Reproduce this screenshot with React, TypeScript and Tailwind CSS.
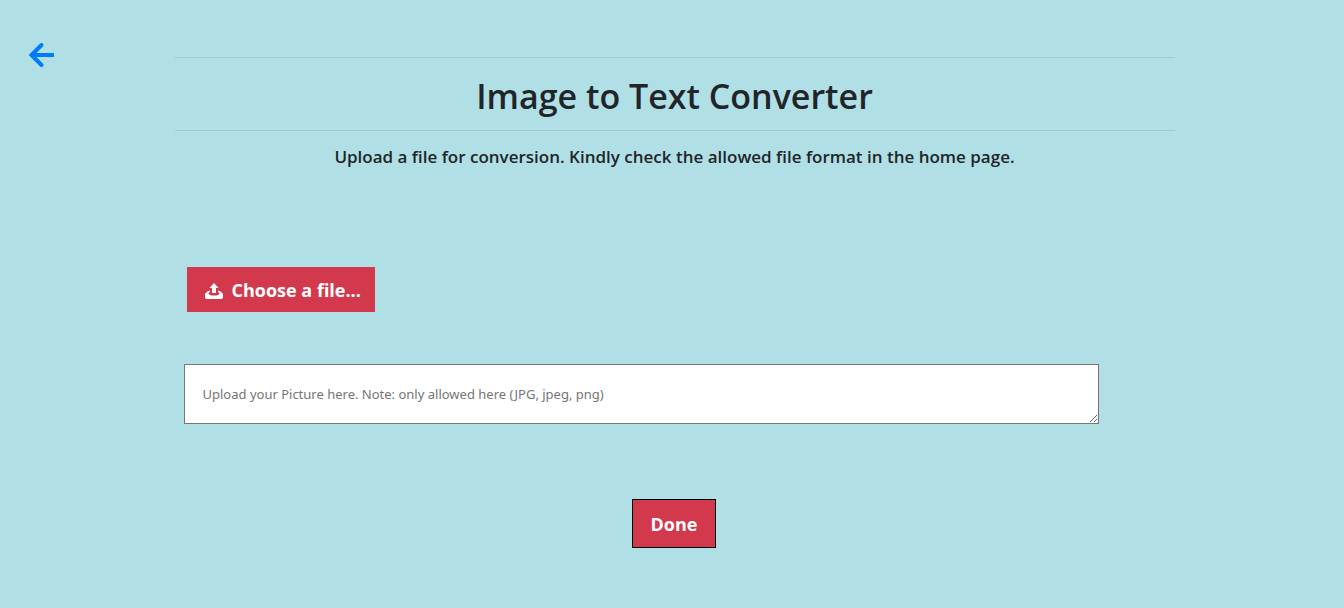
export default function App() {
  return (
    <main className="relative min-h-screen bg-[#b0e0e6] pl-[5px] font-['Open_Sans','Noto_Sans',sans-serif] text-[#212529]">
      <a href="#home" aria-label="Back" className="absolute top-[42px] left-7 text-[#007bff]">
        <svg width="27" height="26" viewBox="0 0 27 26" fill="none" stroke="currentColor" strokeWidth="4" aria-hidden="true">
          <path d="M13.500 3L3.500 13l10 10" strokeLinecap="round" strokeLinejoin="miter" />
          <path d="M4 13h22" />
        </svg>
      </a>
      <div className="mx-auto w-3/4 max-w-[1000px] pt-[57px]">
        <h1 className="border-y border-[#9fcacf] pt-[14px] pb-[10px] text-center text-[34px] leading-[48px] font-semibold">Image to Text Converter</h1>
        <p className="mt-3 text-center text-[17px] leading-7 font-semibold">
          Upload a file for conversion. Kindly check the allowed file format in the home page.
        </p>
        <form className="pr-[10px] pl-[9px]">
          <button type="button" className="mt-24 ml-[3px] flex h-[45px] items-center gap-[9px] bg-[#d3394c] pr-[14px] pl-[18px] text-lg font-bold text-white">
            <svg width="18" height="18" viewBox="0 0 18 18" fill="currentColor" aria-hidden="true">
              <path d="M9 2L4.500 7H7v5h4V7h2.500z" />
              <path d="M5 9.500C3 10 1.500 11 .5 12.300Q0 13 0 14v2q0 2 2 2h14q2 0 2-2v-2q0-1-.5-1.700C16.500 11 15 10 13 9.500V11q1.700.5 1.500 1.500Q14 14.500 9 14.500T3.500 12.500Q3.300 11.500 5 11z" />
            </svg>
            Choose a file...
          </button>
          <textarea aria-label="Picture upload" placeholder="Upload your Picture here. Note: only allowed here (JPG, jpeg, png)" className="mt-[52px] block h-[60px] w-14/15 border border-[#767676] bg-white px-[18px] py-[19px] font-['Noto_Sans',sans-serif] text-[13px] leading-5 placeholder:text-[#757575]" />
          <button type="submit" className="mx-auto mt-[75px] block h-[49px] border border-black bg-[#d3394c] px-[18px] text-lg font-bold text-white">Done</button>
        </form>
      </div>
    </main>
  );
}
